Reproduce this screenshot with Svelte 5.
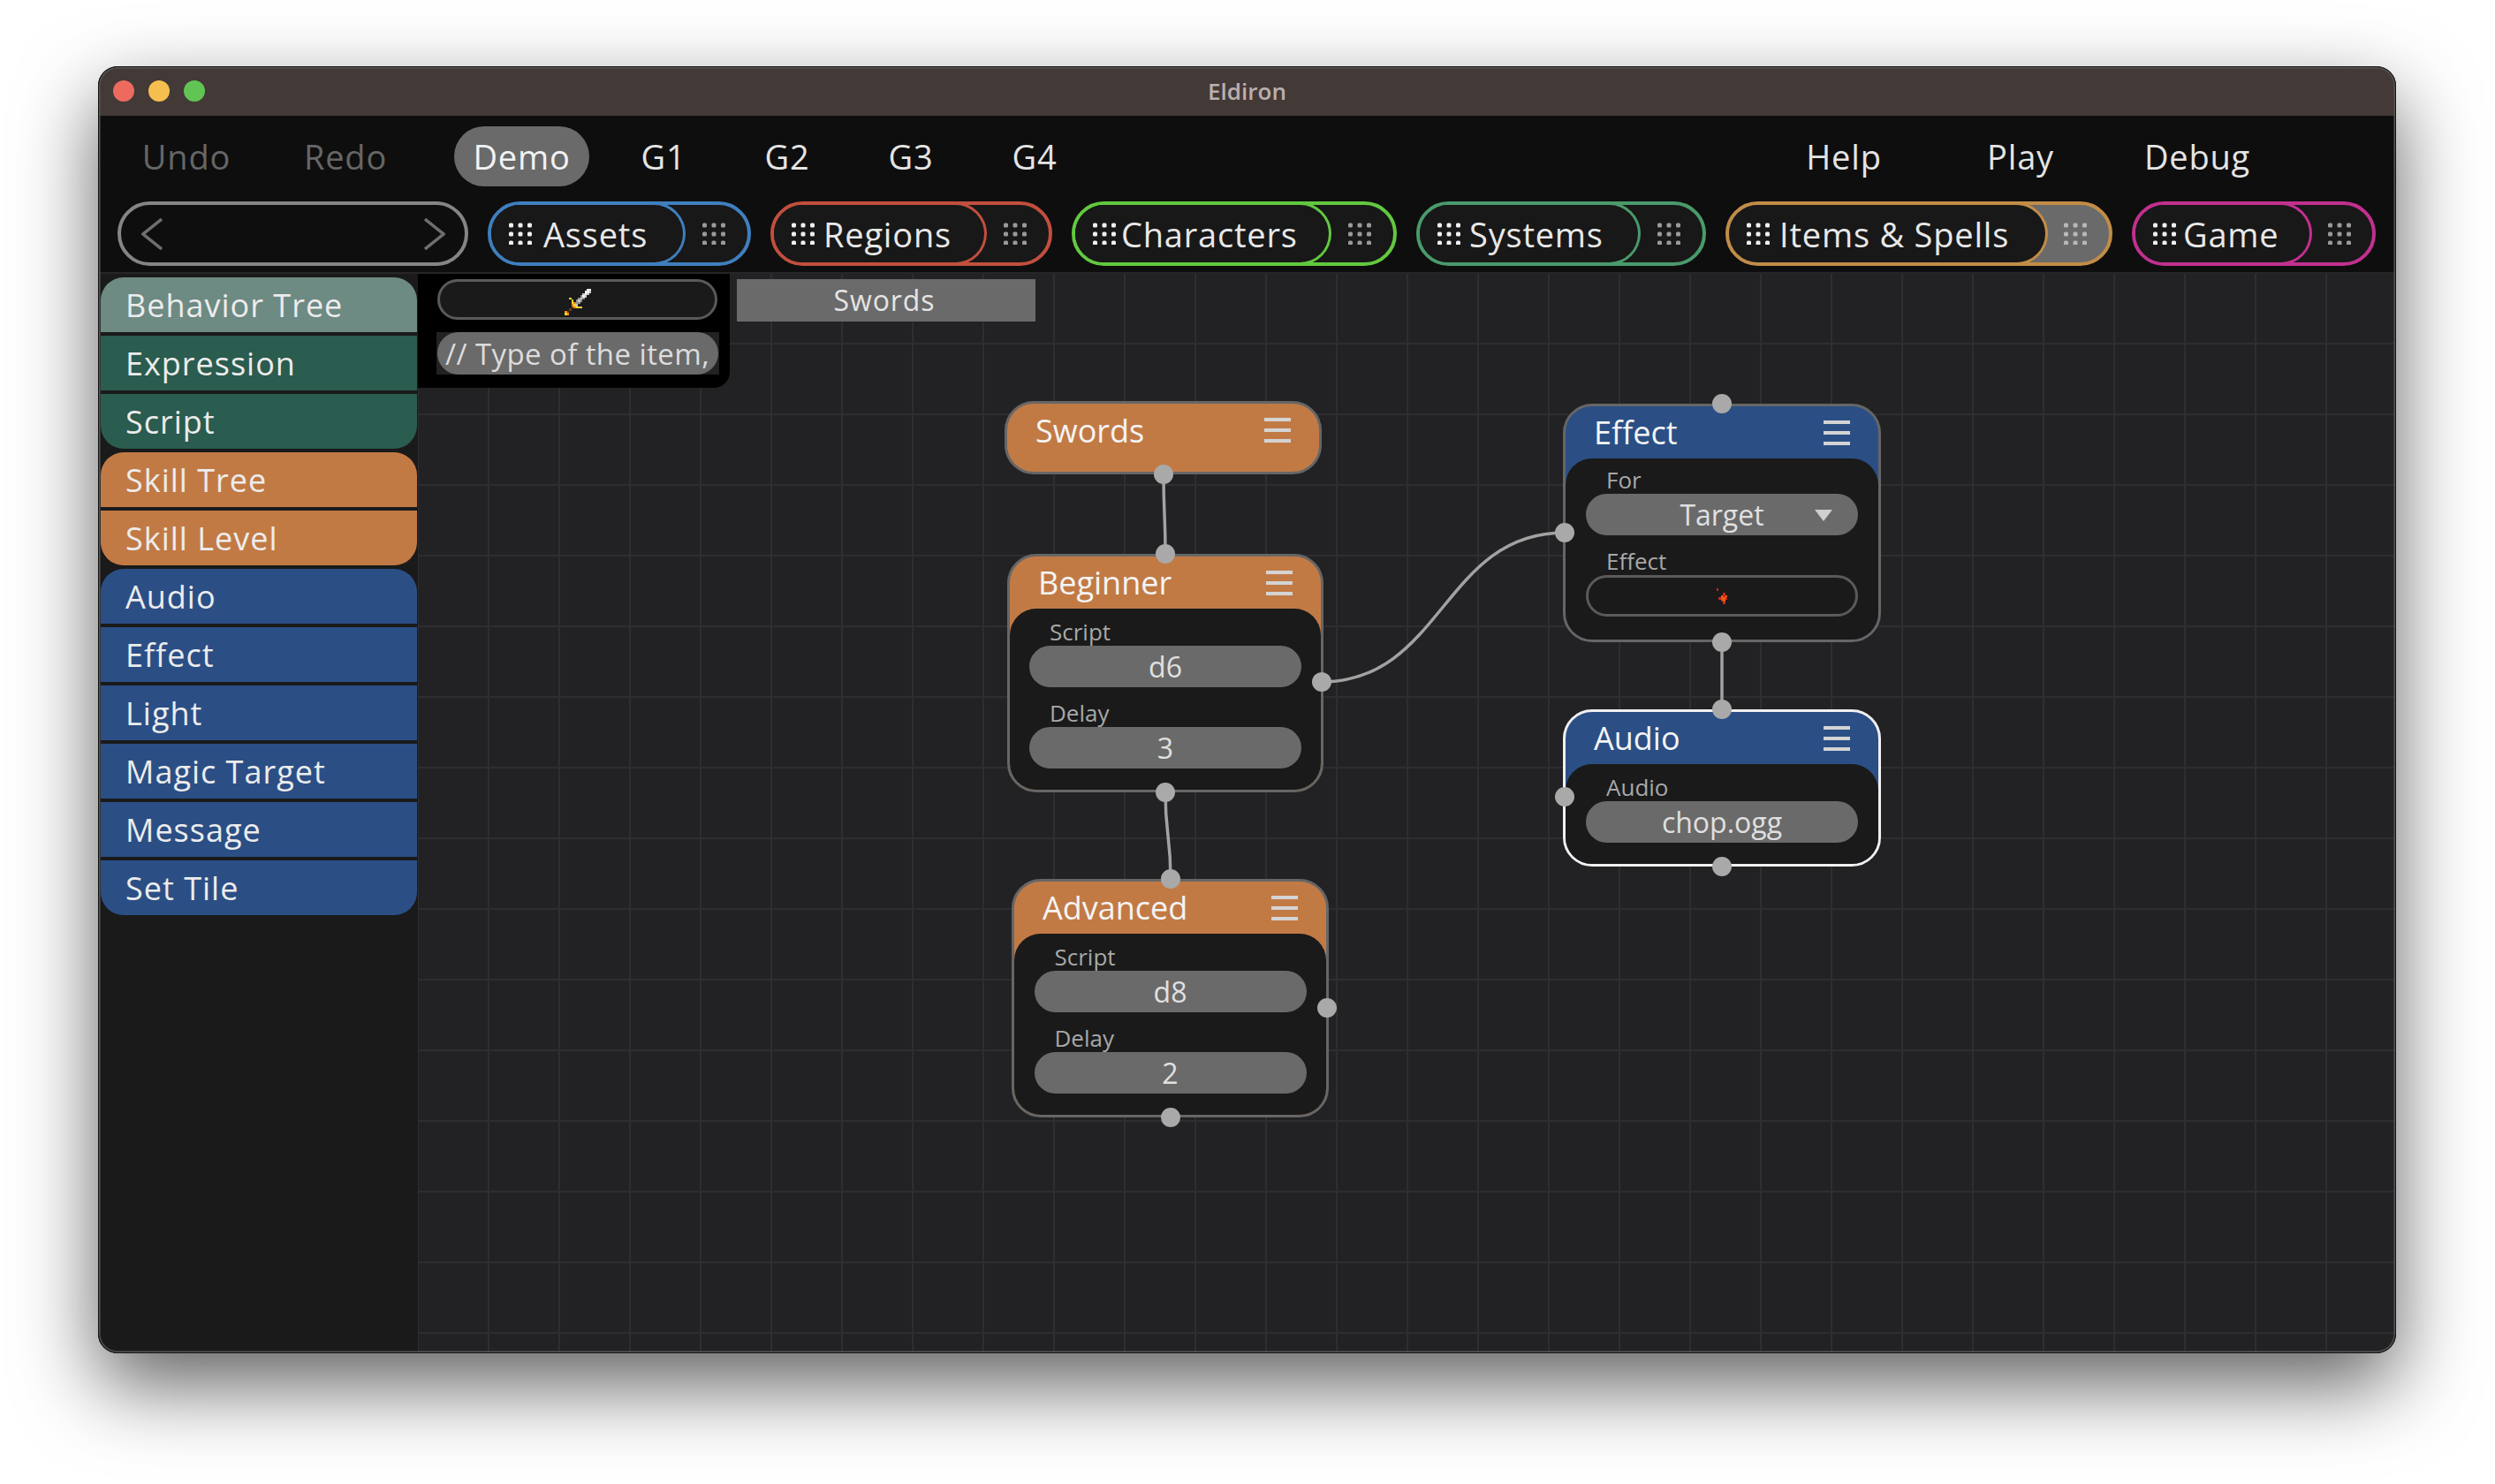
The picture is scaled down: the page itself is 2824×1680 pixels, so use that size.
<script lang="ts">
	const leftMenu = ['G1', 'G2', 'G3', 'G4'];
	const rightMenu = ['Help', 'Play', 'Debug'];

	const modes = [
		{ label: 'Assets', color: '#3f7fbe', width: 298, main: 220, gap: 13 },
		{ label: 'Regions', color: '#c24f3e', width: 319, main: 241, gap: 10 },
		{ label: 'Characters', color: '#62c93f', width: 368, main: 290, gap: 6 },
		{ label: 'Systems', color: '#4a9a6b', width: 328, main: 250, gap: 10 },
		{ label: 'Items & Spells', color: '#c28c47', width: 438, main: 361, gap: 11, selected: true },
		{ label: 'Game', color: '#c2308f', width: 276, main: 200, gap: 8 }
	];

	const behaviors = [
		{ label: 'Behavior Tree', tone: 'sel', edge: 'first' },
		{ label: 'Expression', tone: 'teal' },
		{ label: 'Script', tone: 'teal', edge: 'last' },
		{ label: 'Skill Tree', tone: 'orange', edge: 'first' },
		{ label: 'Skill Level', tone: 'orange', edge: 'last' },
		{ label: 'Audio', tone: 'blue', edge: 'first' },
		{ label: 'Effect', tone: 'blue' },
		{ label: 'Light', tone: 'blue' },
		{ label: 'Magic Target', tone: 'blue' },
		{ label: 'Message', tone: 'blue' },
		{ label: 'Set Tile', tone: 'blue', edge: 'last' }
	];

	const nodes = [
		{ title: 'Swords', x: 664, y: 144, w: 359, h: 83, color: '#c27a45', pad: 12, fields: [], ports: [{ side: 'bottom' }] },
		{
			title: 'Beginner', x: 667, y: 317, w: 358, h: 270, color: '#c27a45', pad: 12,
			fields: [{ label: 'Script', value: 'd6' }, { label: 'Delay', value: '3' }],
			ports: [{ side: 'top' }, { side: 'bottom' }, { side: 'right', at: 131 }]
		},
		{
			title: 'Advanced', x: 672, y: 685, w: 359, h: 270, color: '#c27a45', pad: 12,
			fields: [{ label: 'Script', value: 'd8' }, { label: 'Delay', value: '2' }],
			ports: [{ side: 'top' }, { side: 'bottom' }, { side: 'right', at: 132 }]
		},
		{
			title: 'Effect', x: 1296, y: 147, w: 360, h: 270, color: '#2b4f85', pad: 10,
			fields: [{ label: 'For', value: 'Target', caret: true }, { label: 'Effect', tile: true }],
			ports: [{ side: 'top' }, { side: 'bottom' }, { side: 'left', at: 132 }]
		},
		{
			title: 'Audio', x: 1296, y: 493, w: 360, h: 178, color: '#2b4f85', pad: 12, active: true,
			fields: [{ label: 'Audio', value: 'chop.ogg' }],
			ports: [{ side: 'top' }, { side: 'bottom' }, { side: 'left', at: 85 }]
		}
	];

	const links = [
		'M844 227 C844 272 846 272 846 317',
		'M846 587 C846 636 852 636 852 685',
		'M1022 462 C1160 462 1160 293 1298 293',
		'M1476 417 L1476 494'
	];

	const W = '#f2f2f2', L = '#c8c8c8', G = '#8f8f8f', Y = '#ffd42a', O = '#f08a1c', B = '#6b3a17';
	// pixel art, one cell per source pixel
	const sword = [
		[14, 3, W], [15, 3, W], [13, 4, W], [14, 4, W], [15, 4, L], [12, 5, L], [13, 5, W], [14, 5, L],
		[11, 6, G], [12, 6, W], [13, 6, L], [10, 7, G], [11, 7, L], [12, 7, G], [6, 7, Y], [9, 8, G], [10, 8, L],
		[11, 8, G], [7, 8, Y], [9, 9, G], [10, 9, G], [7, 9, Y], [8, 9, O], [7, 10, O], [8, 10, Y], [9, 10, L],
		[8, 11, O], [9, 11, Y], [10, 11, Y], [11, 11, Y], [7, 11, B], [6, 12, B], [5, 13, B], [4, 13, O], [4, 14, Y], [5, 14, O]
	];
	const R = '#c9281a', F = '#ee5a1e';
	const spark = [
		[1, 0, R], [4, 2, R], [3, 3, F], [4, 3, R], [5, 3, F], [2, 4, R], [3, 4, F], [4, 4, F], [5, 4, R], [3, 5, R], [4, 5, F], [4, 6, R]
	];
</script>

{#snippet dots(size)}
	<svg class="dots" width="27" height="25" viewBox="0 0 27 25" aria-hidden="true">
		{#each [0, 1, 2] as row}
			{#each [0, 1, 2] as col}
				<rect x={col * 10.5 + 1} y={row * 10 + 0.5} width={size} height={size} rx="1.5" />
			{/each}
		{/each}
	</svg>
{/snippet}

<div class="window">
	<header class="titlebar">
		<span class="light close"></span>
		<span class="light min"></span>
		<span class="light max"></span>
		<span class="title">Eldiron</span>
	</header>

	<div class="toolbar">
		<div class="menu">
			<button class="item wide off">Undo</button>
			<button class="item wide off">Redo</button>
			<button class="item demo">Demo</button>
			{#each leftMenu as name}
				<button class="item">{name}</button>
			{/each}
			<div class="menu-right">
				{#each rightMenu as name}
					<button class="item big">{name}</button>
				{/each}
			</div>
		</div>
		<div class="modes">
			<div class="nav">
				<svg width="24" height="36" viewBox="0 0 24 36"><path d="M23 1 L2 18 L23 35" /></svg>
				<svg width="24" height="36" viewBox="0 0 24 36"><path d="M1 1 L22 18 L1 35" /></svg>
			</div>
			{#each modes as mode}
				<div class="mode" class:selected={mode.selected} style="--c:{mode.color};width:{mode.width}px">
					<div class="mode-main" style="width:{mode.main}px;gap:{mode.gap}px">
						{@render dots(5)}
						<span>{mode.label}</span>
					</div>
					<div class="mode-side">
						{@render dots(5)}
					</div>
				</div>
			{/each}
		</div>
	</div>

	<div class="body">
		<aside class="sidebar">
			{#each behaviors as b}
				<button class="behavior {b.tone} {b.edge ?? ''}">{b.label}</button>
			{/each}
		</aside>

		<main class="canvas">
			<svg class="links" viewBox="0 0 2239 1222" width="2239" height="1222" aria-hidden="true">
				{#each links as d}
					<path {d} />
				{/each}
			</svg>

			<div class="panel">
				<div class="tile-pill">
					<svg width="50" height="40" viewBox="0 0 20 16" shape-rendering="crispEdges" aria-hidden="true">
						{#each sword as [x, y, c]}
							<rect {x} {y} width="1" height="1" fill={c} />
						{/each}
					</svg>
				</div>
				<div class="text-well">
					<div class="text-pill">// Type of the item,</div>
				</div>
			</div>

			<div class="name-tab">Swords</div>

			{#each nodes as node}
				<div
					class="node"
					class:active={node.active}
					style="left:{node.x}px;top:{node.y}px;width:{node.w}px;height:{node.h}px;background:{node.color}"
				>
					<div class="node-head" class:full={node.fields.length === 0}>
						<span>{node.title}</span>
						<div class="burger"><i></i><i></i><i></i></div>
					</div>
					{#if node.fields.length > 0}
						<div class="node-body" style="padding-top:{node.pad}px">
							{#each node.fields as field}
								<div class="field">
									<label>{field.label}</label>
									{#if field.tile}
										<div class="value outlined">
											<svg width="18" height="18" viewBox="0 0 7 7" shape-rendering="crispEdges" aria-hidden="true">
												{#each spark as [x, y, c]}
													<rect {x} {y} width="1" height="1" fill={c} />
												{/each}
											</svg>
										</div>
									{:else}
										<div class="value">
											{field.value}
											{#if field.caret}<b class="caret"></b>{/if}
										</div>
									{/if}
								</div>
							{/each}
						</div>
					{/if}
					{#each node.ports as port}
						<span class="port {port.side}" style={port.at ? `top:${port.at}px` : ''}></span>
					{/each}
				</div>
			{/each}
		</main>
	</div>
</div>

<style>
	:global(body) {
		min-height: 1680px;
		background: #fff;
		font-family: 'Open Sans', sans-serif;
	}

	.window {
		position: relative;
		display: flex;
		flex-direction: column;
		box-sizing: border-box;
		width: 2601px;
		height: 1457px;
		margin: 0 0 0 111px;
		top: 75px;
		border-radius: 22px;
		overflow: hidden;
		background: #1a1a1a;
		box-shadow: 0 36px 90px rgba(0, 0, 0, 0.62);
	}

	.window::after {
		content: '';
		position: absolute;
		inset: 0;
		border-radius: 22px;
		border: 1px solid #111;
		box-shadow: inset 0 0 0 1.5px #555;
		pointer-events: none;
	}

	.titlebar {
		position: relative;
		display: flex;
		align-items: center;
		flex: none;
		gap: 16px;
		height: 57px;
		padding-left: 17px;
		box-sizing: border-box;
		background: #433a38;
		border-bottom: 1px solid #111;
	}

	.light {
		width: 24px;
		height: 24px;
		border-radius: 50%;
	}

	.close { background: #ec6a5e; }
	.min { background: #f5bf4f; }
	.max { background: #61c554; }

	.title {
		position: absolute;
		left: 0;
		right: 0;
		text-align: center;
		font-size: 26px;
		font-weight: 600;
		line-height: 55px;
		color: #b9b0ae;
	}

	.toolbar {
		flex: none;
		box-sizing: border-box;
		height: 178px;
		padding-top: 11px;
		background: #0e0e0e;
		border-bottom: 2px solid #262626;
	}

	.menu {
		display: flex;
		align-items: center;
		height: 68px;
		padding: 0 125px 0 10px;
	}

	.menu-right {
		display: flex;
		margin-left: auto;
	}

	.item {
		width: 140px;
		height: 68px;
		padding: 0;
		border: 0;
		background: none;
		font: 400 38px 'Open Sans', sans-serif;
		letter-spacing: 0.8px;
		color: #e4e4e4;
	}

	.item.wide { width: 180px; }
	.item.big { width: 200px; }
	.item.off { color: #666; }

	.item.demo {
		width: 153px;
		margin: 0 14px 0 33px;
		border-radius: 34px;
		background: #6a6a6a;
		color: #f2f2f2;
	}

	.modes {
		display: flex;
		gap: 22px;
		margin-top: 17px;
		padding-left: 22px;
	}

	.nav {
		display: flex;
		align-items: center;
		justify-content: space-between;
		box-sizing: border-box;
		width: 397px;
		height: 73px;
		padding: 0 22px 0 23px;
		border: 4px solid #858585;
		border-radius: 37px;
		background: #0e0e0e;
	}

	.nav path {
		fill: none;
		stroke: #6e6e6e;
		stroke-width: 3.5;
	}

	.mode {
		display: flex;
		flex: none;
		box-sizing: border-box;
		height: 73px;
		border: 4px solid var(--c);
		border-radius: 37px;
		overflow: hidden;
		background: #181818;
	}

	.mode.selected { background: #6a6a6a; }

	.mode-main {
		display: flex;
		flex: none;
		align-items: center;
		box-sizing: border-box;
		margin: -3px 0;
		padding-left: 19px;
		border: 3px solid var(--c);
		border-left: 0;
		border-radius: 0 36px 36px 0;
		background: #181818;
		font-size: 38px;
		letter-spacing: 0.8px;
		color: #e8e8e8;
		white-space: nowrap;
	}

	.mode-main .dots { fill: #f0f0f0; }

	.mode-side {
		display: flex;
		flex: 1;
		align-items: center;
		justify-content: center;
		padding-right: 8px;
	}

	.mode-side .dots { fill: #9a9a9a; }
	.mode.selected .mode-side .dots { fill: #b8b8b8; }

	.body {
		display: flex;
		flex: 1;
		min-height: 0;
	}

	.sidebar {
		display: flex;
		flex: none;
		flex-direction: column;
		gap: 4px;
		box-sizing: border-box;
		width: 362px;
		padding: 4px 1px 0 3px;
		background: #1a1a1a;
	}

	.behavior {
		flex: none;
		height: 62px;
		padding: 0 0 0 28px;
		border: 0;
		text-align: left;
		font: 400 36px 'Open Sans', sans-serif;
		letter-spacing: 1px;
		color: #ececec;
	}

	.sel { background: #6d8a83; }
	.teal { background: #2a5c4f; }
	.orange { background: #c27a45; }
	.blue { background: #2b4f85; }
	.first { border-radius: 26px 26px 0 0; }
	.last { border-radius: 0 0 26px 26px; }

	.canvas {
		position: relative;
		flex: 1;
		overflow: hidden;
		background-color: #222224;
		background-image:
			linear-gradient(#2e2e30 2px, transparent 2px),
			linear-gradient(90deg, #2e2e30 2px, transparent 2px);
		background-size: 80px 80px;
		background-position: -1px 78px;
	}

	.links {
		position: absolute;
		left: 0;
		top: 0;
	}

	.links path {
		fill: none;
		stroke: #a2a2a2;
		stroke-width: 3.5;
	}

	.panel {
		position: absolute;
		left: 0;
		top: -2px;
		display: flex;
		flex-direction: column;
		gap: 14px;
		box-sizing: border-box;
		width: 353px;
		height: 131px;
		padding: 8px 0 0 22px;
		border-radius: 0 0 18px 0;
		background: #000;
	}

	.tile-pill {
		display: flex;
		align-items: center;
		justify-content: center;
		box-sizing: border-box;
		width: 317px;
		height: 46px;
		border: 3px solid #5a5a5a;
		border-radius: 23px;
		background: #1a1a1a;
	}

	.text-well {
		width: 320px;
		height: 48px;
		margin-left: -1px;
		background: #222;
	}

	.text-pill {
		box-sizing: border-box;
		width: 318px;
		height: 48px;
		margin-left: 1px;
		padding-left: 9px;
		border-radius: 24px;
		background: #6a6a6a;
		font-size: 33px;
		letter-spacing: 0.4px;
		line-height: 50px;
		white-space: nowrap;
		color: #dcdcdc;
	}

	.name-tab {
		position: absolute;
		left: 361px;
		top: 6px;
		box-sizing: border-box;
		width: 338px;
		height: 48px;
		padding-right: 4px;
		background: #6a6a6a;
		font-size: 32px;
		letter-spacing: 0.9px;
		line-height: 48px;
		text-align: center;
		color: #e4e4e4;
	}

	.node {
		position: absolute;
		display: flex;
		flex-direction: column;
		box-sizing: border-box;
		border: 3px solid #666;
		border-radius: 33px;
	}

	.node.active { border-color: #f0f0f0; }

	.node-head {
		display: flex;
		flex: none;
		align-items: center;
		justify-content: space-between;
		box-sizing: border-box;
		height: 59px;
		padding: 0 32px 0 32px;
		font-size: 36px;
		color: #f4f4f4;
	}

	.node-head.full { height: 60px; }

	.burger {
		display: flex;
		flex-direction: column;
		gap: 8px;
		width: 30px;
	}

	.burger i {
		display: block;
		height: 4px;
		background: #d4d4d4;
	}

	.node-body {
		display: flex;
		flex: 1;
		flex-direction: column;
		align-items: center;
		gap: 15px;
		box-sizing: border-box;
		border-radius: 30px;
		background: #1a1a1a;
	}

	.field {
		width: 308px;
	}

	.field label {
		display: block;
		height: 30px;
		padding-left: 23px;
		font-size: 26px;
		line-height: 28px;
		color: #a8a8a8;
	}

	.value {
		position: relative;
		display: flex;
		align-items: center;
		justify-content: center;
		box-sizing: border-box;
		height: 47px;
		border-radius: 24px;
		background: #6a6a6a;
		font-size: 32px;
		color: #e0e0e0;
	}

	.value.outlined {
		border: 3px solid #5a5a5a;
		background: #1a1a1a;
	}

	.caret {
		position: absolute;
		right: 29px;
		top: 18px;
		border-top: 13px solid #d0d0d0;
		border-left: 10px solid transparent;
		border-right: 10px solid transparent;
	}

	.port {
		position: absolute;
		width: 22px;
		height: 22px;
		border-radius: 50%;
		background: #a9a9a9;
	}

	.port.top {
		top: -14px;
		left: 50%;
		margin-left: -11px;
	}

	.port.bottom {
		bottom: -14px;
		left: 50%;
		margin-left: -11px;
	}

	.port.left { left: -12px; }
	.port.right { right: -12px; }
</style>
